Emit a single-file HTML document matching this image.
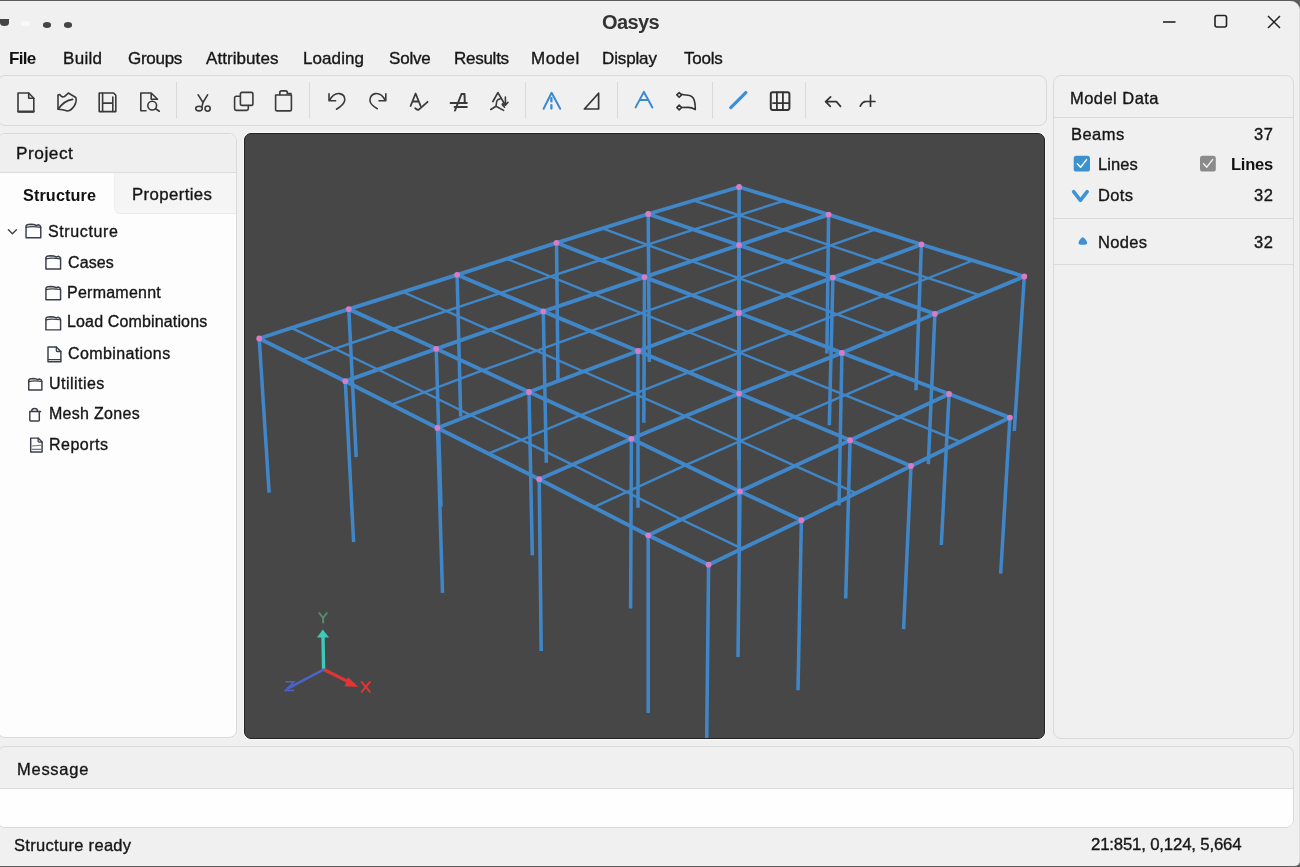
<!DOCTYPE html>
<html><head><meta charset="utf-8">
<style>
*{margin:0;padding:0;box-sizing:border-box}
html,body{width:1300px;height:867px;overflow:hidden;background:#5c5c5c;font-family:"Liberation Sans",sans-serif;color:#222}
.abs{position:absolute}
#win{position:absolute;left:0;top:1px;width:1300px;height:865px;background:#f0f0f0;border-right:1.5px solid #e0e0e0;border-radius:0 9px 5px 0}
.t{position:absolute;white-space:nowrap;line-height:1;will-change:transform}
.menu{font-size:17px;color:#1e1e1e}
.panel{position:absolute;border:1px solid #d9d9d9;border-radius:8px}
.ico{position:absolute}
.sep{position:absolute;width:1px;background:#d6d6d6;top:85px;height:33px}
</style></head><body>
<div id="win"></div>
<!-- title bar -->
<div class="abs" style="left:0;top:19px;width:9px;height:7px;background:#444;border-radius:0 0 50% 50%"></div>
<div class="abs" style="left:21px;top:21px;width:9px;height:5px;background:#f8f8f8;border-radius:40%"></div>
<div class="abs" style="left:43px;top:22px;width:8px;height:5.5px;background:#444;border-radius:50%"></div>
<div class="abs" style="left:64px;top:22px;width:8px;height:5.5px;background:#444;border-radius:50%"></div>
<svg class="ico" style="left:1155px;top:8px" width="140" height="28" viewBox="1155 8 140 28">
 <line x1="1163" y1="22" x2="1175.5" y2="22" stroke="#222" stroke-width="1.6"/>
 <rect x="1215" y="15.5" width="11.5" height="11.5" rx="2" fill="none" stroke="#222" stroke-width="1.6"/>
 <path d="M1268 16 L1280 28 M1280 16 L1268 28" stroke="#222" stroke-width="1.5"/>
</svg>
<!-- menu -->
<!-- toolbar panel -->
<div class="panel" style="left:-3px;top:75px;width:1050px;height:51px"></div>
<svg class="ico" style="left:0;top:76px" width="1040" height="49" viewBox="0 76 1040 49">
<g fill="none" stroke="#3a3a3a" stroke-width="1.6" stroke-linejoin="round" stroke-linecap="round">
 <!-- new -->
 <path d="M18 93 L28.7 93 L33.8 98.2 L33.8 111.7 L18 111.7 Z"/><path d="M18.5 111.6 L33.5 111.6" stroke-width="2.2"/>
 <path d="M28.7 93 L28.7 98.3 L33.8 98.3" stroke-width="1.6"/>
 <!-- open -->
 <path d="M58 95 Q60 94 60.5 95.5 Q62 97.5 64.5 96.5 Q66.5 95 68.3 93 L75.8 97.5 Q77 101 74.5 105.5 Q71.5 110.5 67.5 111 Q62.5 109.5 58 109.3 Z"/>
 <path d="M58.3 109 Q64 100.5 72.6 99.3" stroke-width="1.7"/>
 <!-- save -->
 <path d="M99.2 93 L113.6 93 L115.8 95.3 L115.8 111.6 L99.2 111.6 Z"/>
 <path d="M102.6 93.2 L102.6 111.5 M112.8 97 L112.8 111.5 M102.6 103.1 L112.8 103.1"/>
 <!-- preview -->
 <path d="M146 110.8 L140.8 110.8 L140.8 93 L151.2 93 L157.5 99.2 L151.2 99.2 L151.2 93"/>
 <circle cx="152.2" cy="105.6" r="4.4"/>
 <path d="M155.5 108.8 L159.3 111.2"/>
 <!-- scissors -->
 <path d="M198.2 94.8 L203 102.5 L207.6 94.8 M203 102.5 L202 106.5" stroke-width="1.6"/>
 <ellipse cx="199" cy="108.6" rx="3.3" ry="2.3" stroke-width="1.6"/>
 <circle cx="207.6" cy="108.6" r="2.6" stroke-width="1.6"/>
 <!-- copy -->
 <path d="M240.3 96.3 L236.3 96.3 Q234.6 96.3 234.6 98 L234.6 108.8 Q234.6 110.4 236.3 110.4 L246.6 110.4 Q248.3 110.4 248.3 108.8 L248.3 105.5"/>
 <rect x="240.4" y="92.4" width="12.5" height="13" rx="1.7"/>
 <!-- clipboard -->
 <path d="M275.6 95 L291.4 95 L291.4 109.2 Q291.4 110.9 289.7 110.9 L277.3 110.9 Q275.6 110.9 275.6 109.2 Z"/>
 <path d="M279.8 94.5 L279.8 92.6 Q279.8 90.8 281.6 90.8 L285.6 90.8 Q287.3 90.8 287.3 92.6 L287.3 93.6 L291 93.6" stroke-width="1.7"/>
 <!-- undo -->
 <path d="M329 93.8 L329 100.8 L335.6 100.8"/>
 <path d="M329.8 100 Q333.5 93 339.5 93.6 Q345 94.5 344.8 100.2 Q344 105 336.5 109.2"/>
 <!-- redo -->
 <path d="M385.8 93.8 L385.8 100.8 L379 100.8"/>
 <path d="M385 100 Q381.5 93 375.5 93.6 Q370 94.5 369.9 100.5 Q370.5 105 377.3 108.7"/>
 <!-- A check -->
 <path d="M410.6 106 L415.6 93.5 L420.6 106 M412.6 101.5 L418.8 101.5" stroke-width="1.8"/>
 <path d="M415.2 108.2 Q417 110.2 418.8 109.6 L427.6 101.8" stroke-width="1.8"/>
 <!-- A strike -->
 <path d="M455 110.5 L461.5 94 L464.5 94 L464.8 102.5" stroke-width="2"/>
 <path d="M450.6 103.1 L466.8 103.1 M454.6 107.1 L466.8 107.1" stroke-width="2"/>
 <!-- A arrow -->
 <path d="M492.9 101.5 L497.9 92.6 L504.2 103.2" stroke-width="1.7"/>
 <path d="M505.4 97 L505.4 104.5 M502.5 103.8 L505.4 105.3 L508 102.3" stroke-width="1.6"/>
 <path d="M490.8 109.5 L496 106.2 L503.6 110.4 M496 106.2 L496.8 101 Q497.8 99 500.2 98.9 M502.3 104.6 L504.6 107.2" stroke-width="1.6"/>
</g>
<g fill="none" stroke="#3b8ad0" stroke-width="2" stroke-linecap="round" stroke-linejoin="round">
 <path d="M543.6 108.8 L551.6 92.8 L560.2 108.8"/>
 <path d="M551.4 98.2 L551.4 101.4 M551.4 105.2 L551.4 108.6" stroke-width="2.3"/>
 <path d="M635.6 107.4 L643.9 91.9 L652.4 107.4 M639.6 100.1 L648.4 100.1"/>
 <path d="M730.8 107.6 L745.8 92.6" stroke-width="3.3" stroke="#3d8fd6"/>
</g>
<g fill="none" stroke="#333" stroke-width="1.7" stroke-linejoin="round" stroke-linecap="round">
 <path d="M584.4 109 L598.6 93.2 L598.6 109 Z"/>
 <!-- curve -->
 <path d="M679.2 92.6 L681.6 94.9 L679.2 97.3 L676.8 94.9 Z M679.2 105.1 L681.6 107.5 L679.2 109.9 L676.8 107.5 Z" stroke-width="1.6"/>
 <path d="M681.6 94.3 Q683.5 95 686 95 Q690.5 95 692.8 97.5 Q695.3 100.5 695.3 109.6 Q692 107.4 688 107.4 L681.6 107.5" stroke-width="1.6"/>
 <!-- grid -->
 <rect x="770.8" y="92.2" width="18.6" height="17.7" rx="1.8" stroke-width="2"/>
 <path d="M776.9 92.5 L776.9 109.8 M782.9 92.5 L782.9 109.8 M773 103.1 L789.2 103.1" stroke-width="1.8"/>
 <!-- back arrow -->
 <path d="M830.6 96.8 L825.6 101.6 L830.3 106.4 M825.8 101.6 L836.4 101.6 L840.5 106.4" stroke-width="1.7"/>
 <!-- plus curve -->
 <path d="M870.5 95.4 L870.5 106.2 M864.5 101.5 L875 101.5 M860.3 106.2 Q862.5 101.6 865.5 101.6" stroke-width="1.7"/>
</g>
<g stroke="#d9d9d9" stroke-width="1">
 <line x1="176.5" y1="82" x2="176.5" y2="118.5"/>
 <line x1="309.5" y1="82" x2="309.5" y2="118.5"/>
 <line x1="525.5" y1="82" x2="525.5" y2="118.5"/>
 <line x1="617.5" y1="82" x2="617.5" y2="118.5"/>
 <line x1="712.5" y1="82" x2="712.5" y2="118.5"/>
 <line x1="805.5" y1="82" x2="805.5" y2="118.5"/>
</g>
</svg>

<!-- project panel -->
<div class="panel" style="left:-3px;top:133px;width:240px;height:605px;background:#fdfdfd;overflow:hidden">
  <div class="abs" style="left:0;top:0;width:240px;height:39px;background:#efefef;border-bottom:1px solid #dcdcdc"></div>
  <div class="abs" style="left:116px;top:39px;width:124px;height:41px;background:#f5f5f5;border-bottom-left-radius:6px;border-bottom:1px solid #ececec;border-left:1px solid #f0f0f0"></div>
</div>
<svg class="ico" style="left:0;top:215px" width="70" height="245" viewBox="0 215 70 245"><g fill="none" stroke="#3a3e47" stroke-width="1.45" stroke-linejoin="round" stroke-linecap="round">
<path d="M8.4 229.8 L12.4 233.8 L16.4 229.8" stroke="#444" stroke-width="1.4"/>
<path d="M26.03 237.68 L26.03 225.92 Q26.63 224.32 30.53 224.32 Q34.03 224.42 36.57 225.52 L38.38 224.82 Q40.77 225.52 40.77 227.32 L40.77 237.68 Z" stroke-width="1.45"/><path d="M26.03 227.42 Q31.03 225.92 40.77 227.32" stroke-width="1.2"/>
<path d="M45.93 268.97 L45.93 257.43 Q46.53 255.82 50.43 255.82 Q53.93 255.92 56.38 257.02 L58.18 256.32 Q60.58 257.02 60.58 258.82 L60.58 268.97 Z" stroke-width="1.45"/><path d="M45.93 258.93 Q50.93 257.43 60.58 258.82" stroke-width="1.2"/>
<path d="M45.93 299.68 L45.93 288.13 Q46.53 286.53 50.43 286.53 Q53.93 286.63 56.38 287.73 L58.18 287.03 Q60.58 287.73 60.58 289.53 L60.58 299.68 Z" stroke-width="1.45"/><path d="M45.93 289.63 Q50.93 288.13 60.58 289.53" stroke-width="1.2"/>
<path d="M45.93 329.88 L45.93 318.33 Q46.53 316.73 50.43 316.73 Q53.93 316.83 56.38 317.93 L58.18 317.23 Q60.58 317.93 60.58 319.73 L60.58 329.88 Z" stroke-width="1.45"/><path d="M45.93 319.83 Q50.93 318.33 60.58 319.73" stroke-width="1.2"/>
<path d="M48.0 346.9 L56.3 346.9 L60.9 351.5 L60.9 361.7 L48.0 361.7 Z"/><path d="M56.3 346.9 L56.3 350.5 Q56.3 351.5 57.3 351.5 L60.9 351.5" stroke-width="1.3"/>
<path d="M48.3 359.6 L60.6 359.6" stroke-width="1.2"/>
<path d="M28.73 390.07 L28.73 380.13 Q29.33 378.53 33.23 378.53 Q36.73 378.63 37.67 379.73 L39.48 379.03 Q41.88 379.73 41.88 381.53 L41.88 390.07 Z" stroke-width="1.45"/><path d="M28.73 381.63 Q33.73 380.13 41.88 381.53" stroke-width="1.2"/>
<path d="M29.8 411.5 L40.5 411.5 L39.3 412 L39.3 420.3 Q39.3 421 38.5 421 L30.6 421 Q29.8 421 29.8 420.3 Z"/>
<path d="M31.6 411.2 Q31.8 408.4 34.6 408.4 Q37.4 408.4 37.6 411.2" stroke-width="1.5"/>
<path d="M30.7 438.1 L38.1 438.1 L42.1 442.1 L42.1 451.9 L30.7 451.9 Z"/><path d="M38.1 438.1 L38.1 441.1 Q38.1 442.1 39.1 442.1 L42.1 442.1" stroke-width="1.3"/>
<path d="M32.3 446 L40.8 445.2" stroke="#777" stroke-width="1.1"/>
<path d="M32.3 449.3 L40.8 449.3" stroke="#5a78b8" stroke-width="1.3"/>
</g></svg>
<!-- viewport -->
<div class="abs" style="left:244px;top:133px;width:801px;height:606px;background:#474747;border:1px solid #232323;border-radius:7px;overflow:hidden;box-shadow:0 0 0 1px #f9f9f9">
<svg width="802" height="606" viewBox="244 133 802 606" style="position:absolute;left:-1px;top:-1px">
<path d="M302.2,359.9 L392.5,329.0 L500.2,293.1 L600.5,260.0 L693.7,229.6 L783.9,200.8" fill="none" stroke="#4087c9" stroke-width="2.4"/>
<path d="M391.4,404.6 L482.6,370.4 L590.6,331.2 L691.7,295.1 L786.0,261.4 L875.0,229.6" fill="none" stroke="#4087c9" stroke-width="2.4"/>
<path d="M488.4,453.6 L580.2,415.4 L688.5,372.3 L790.4,332.9 L883.9,295.7 L972.8,260.5" fill="none" stroke="#4087c9" stroke-width="2.4"/>
<path d="M593.7,507.2 L685.7,465.1 L794.6,416.9 L895.5,373.4" fill="none" stroke="#4087c9" stroke-width="2.4"/>
<path d="M291.5,327.9 L378.0,369.5 L470.4,415.0 L572.4,464.7 L681.2,519.5 L742.0,548.7" fill="none" stroke="#4087c9" stroke-width="2.4"/>
<path d="M403.0,292.0 L489.8,330.1 L583.5,371.5 L685.2,416.2 L795.0,465.8 L856.2,493.1" fill="none" stroke="#4087c9" stroke-width="2.4"/>
<path d="M506.8,258.8 L593.9,294.2 L688.5,332.0 L790.5,373.2 L899.6,417.1 L960.5,441.8" fill="none" stroke="#4087c9" stroke-width="2.4"/>
<path d="M602.4,228.4 L691.8,261.1 L785.9,295.3 L888.4,333.4" fill="none" stroke="#4087c9" stroke-width="2.4"/>
<path d="M693.7,200.5 L783.9,229.8 L877.1,261.1 L979.6,295.1" fill="none" stroke="#4087c9" stroke-width="2.4"/>
<line x1="259.2" y1="338.5" x2="269.1" y2="492.6" stroke="#4087c9" stroke-width="3.5"/>
<line x1="348.8" y1="309.1" x2="356.2" y2="457.1" stroke="#4087c9" stroke-width="3.5"/>
<line x1="457.1" y1="274.8" x2="460.7" y2="416.5" stroke="#4087c9" stroke-width="3.5"/>
<line x1="556.5" y1="242.8" x2="558.0" y2="379.9" stroke="#4087c9" stroke-width="3.5"/>
<line x1="648.2" y1="214.0" x2="649.3" y2="361.9" stroke="#4087c9" stroke-width="3.5"/>
<line x1="739.1" y1="187.0" x2="739.0" y2="330.0" stroke="#4087c9" stroke-width="3.5"/>
<line x1="345.3" y1="381.2" x2="353.6" y2="542.1" stroke="#4087c9" stroke-width="3.5"/>
<line x1="436.2" y1="348.8" x2="441.0" y2="506.6" stroke="#4087c9" stroke-width="3.5"/>
<line x1="543.3" y1="311.4" x2="546.3" y2="462.7" stroke="#4087c9" stroke-width="3.5"/>
<line x1="644.5" y1="277.1" x2="643.8" y2="422.7" stroke="#4087c9" stroke-width="3.5"/>
<line x1="739.1" y1="245.1" x2="739.0" y2="390.0" stroke="#4087c9" stroke-width="3.5"/>
<line x1="828.6" y1="214.6" x2="826.9" y2="353.4" stroke="#4087c9" stroke-width="3.5"/>
<line x1="437.5" y1="428.0" x2="442.5" y2="592.9" stroke="#4087c9" stroke-width="3.5"/>
<line x1="529.0" y1="392.0" x2="532.3" y2="555.3" stroke="#4087c9" stroke-width="3.5"/>
<line x1="638.0" y1="351.0" x2="638.0" y2="507.8" stroke="#4087c9" stroke-width="3.5"/>
<line x1="738.9" y1="313.0" x2="739.0" y2="460.0" stroke="#4087c9" stroke-width="3.5"/>
<line x1="832.9" y1="277.6" x2="829.3" y2="425.3" stroke="#4087c9" stroke-width="3.5"/>
<line x1="921.4" y1="244.5" x2="916.0" y2="390.2" stroke="#4087c9" stroke-width="3.5"/>
<line x1="539.2" y1="479.2" x2="541.2" y2="651.0" stroke="#4087c9" stroke-width="3.5"/>
<line x1="631.4" y1="438.8" x2="630.6" y2="608.6" stroke="#4087c9" stroke-width="3.5"/>
<line x1="739.1" y1="393.6" x2="739.0" y2="550.0" stroke="#4087c9" stroke-width="3.5"/>
<line x1="841.9" y1="352.9" x2="839.0" y2="505.5" stroke="#4087c9" stroke-width="3.5"/>
<line x1="934.9" y1="313.8" x2="928.3" y2="464.1" stroke="#4087c9" stroke-width="3.5"/>
<line x1="1024.3" y1="276.5" x2="1014.3" y2="431.0" stroke="#4087c9" stroke-width="3.5"/>
<line x1="648.2" y1="535.3" x2="648.2" y2="713.0" stroke="#4087c9" stroke-width="3.5"/>
<line x1="740.0" y1="491.4" x2="738.0" y2="656.9" stroke="#4087c9" stroke-width="3.5"/>
<line x1="850.1" y1="440.2" x2="845.7" y2="598.5" stroke="#4087c9" stroke-width="3.5"/>
<line x1="949.1" y1="394.0" x2="941.3" y2="545.0" stroke="#4087c9" stroke-width="3.5"/>
<line x1="708.6" y1="564.7" x2="706.7" y2="740.0" stroke="#4087c9" stroke-width="3.5"/>
<line x1="801.4" y1="520.2" x2="798.0" y2="690.2" stroke="#4087c9" stroke-width="3.5"/>
<line x1="911.0" y1="466.0" x2="903.6" y2="629.1" stroke="#4087c9" stroke-width="3.5"/>
<line x1="1009.9" y1="417.6" x2="1000.7" y2="573.7" stroke="#4087c9" stroke-width="3.5"/>
<path d="M259.2,338.5 L348.8,309.1 L457.1,274.8 L556.5,242.8 L648.2,214.0 L739.1,187.0" fill="none" stroke="#4087c9" stroke-width="3.9" stroke-linejoin="round"/>
<path d="M345.3,381.2 L436.2,348.8 L543.3,311.4 L644.5,277.1 L739.1,245.1 L828.6,214.6" fill="none" stroke="#4087c9" stroke-width="3.9" stroke-linejoin="round"/>
<path d="M437.5,428.0 L529.0,392.0 L638.0,351.0 L738.9,313.0 L832.9,277.6 L921.4,244.5" fill="none" stroke="#4087c9" stroke-width="3.9" stroke-linejoin="round"/>
<path d="M539.2,479.2 L631.4,438.8 L739.1,393.6 L841.9,352.9 L934.9,313.8 L1024.3,276.5" fill="none" stroke="#4087c9" stroke-width="3.9" stroke-linejoin="round"/>
<path d="M648.2,535.3 L740.0,491.4 L850.1,440.2 L949.1,394.0" fill="none" stroke="#4087c9" stroke-width="3.9" stroke-linejoin="round"/>
<path d="M708.6,564.7 L801.4,520.2 L911.0,466.0 L1009.9,417.6" fill="none" stroke="#4087c9" stroke-width="3.9" stroke-linejoin="round"/>
<path d="M259.2,338.5 L345.3,381.2 L437.5,428.0 L539.2,479.2 L648.2,535.3 L708.6,564.7" fill="none" stroke="#4087c9" stroke-width="3.9" stroke-linejoin="round"/>
<path d="M348.8,309.1 L436.2,348.8 L529.0,392.0 L631.4,438.8 L740.0,491.4 L801.4,520.2" fill="none" stroke="#4087c9" stroke-width="3.9" stroke-linejoin="round"/>
<path d="M457.1,274.8 L543.3,311.4 L638.0,351.0 L739.1,393.6 L850.1,440.2 L911.0,466.0" fill="none" stroke="#4087c9" stroke-width="3.9" stroke-linejoin="round"/>
<path d="M556.5,242.8 L644.5,277.1 L738.9,313.0 L841.9,352.9 L949.1,394.0 L1009.9,417.6" fill="none" stroke="#4087c9" stroke-width="3.9" stroke-linejoin="round"/>
<path d="M648.2,214.0 L739.1,245.1 L832.9,277.6 L934.9,313.8" fill="none" stroke="#4087c9" stroke-width="3.9" stroke-linejoin="round"/>
<path d="M739.1,187.0 L828.6,214.6 L921.4,244.5 L1024.3,276.5" fill="none" stroke="#4087c9" stroke-width="3.9" stroke-linejoin="round"/>
<circle cx="259.2" cy="338.5" r="2.9" fill="#d97cc6"/>
<circle cx="348.8" cy="309.1" r="2.9" fill="#d97cc6"/>
<circle cx="457.1" cy="274.8" r="2.9" fill="#d97cc6"/>
<circle cx="556.5" cy="242.8" r="2.9" fill="#d97cc6"/>
<circle cx="648.2" cy="214.0" r="2.9" fill="#d97cc6"/>
<circle cx="739.1" cy="187.0" r="2.9" fill="#d97cc6"/>
<circle cx="345.3" cy="381.2" r="2.9" fill="#d97cc6"/>
<circle cx="436.2" cy="348.8" r="2.9" fill="#d97cc6"/>
<circle cx="543.3" cy="311.4" r="2.9" fill="#d97cc6"/>
<circle cx="644.5" cy="277.1" r="2.9" fill="#d97cc6"/>
<circle cx="739.1" cy="245.1" r="2.9" fill="#d97cc6"/>
<circle cx="828.6" cy="214.6" r="2.9" fill="#d97cc6"/>
<circle cx="437.5" cy="428.0" r="2.9" fill="#d97cc6"/>
<circle cx="529.0" cy="392.0" r="2.9" fill="#d97cc6"/>
<circle cx="638.0" cy="351.0" r="2.9" fill="#d97cc6"/>
<circle cx="738.9" cy="313.0" r="2.9" fill="#d97cc6"/>
<circle cx="832.9" cy="277.6" r="2.9" fill="#d97cc6"/>
<circle cx="921.4" cy="244.5" r="2.9" fill="#d97cc6"/>
<circle cx="539.2" cy="479.2" r="2.9" fill="#d97cc6"/>
<circle cx="631.4" cy="438.8" r="2.9" fill="#d97cc6"/>
<circle cx="739.1" cy="393.6" r="2.9" fill="#d97cc6"/>
<circle cx="841.9" cy="352.9" r="2.9" fill="#d97cc6"/>
<circle cx="934.9" cy="313.8" r="2.9" fill="#d97cc6"/>
<circle cx="1024.3" cy="276.5" r="2.9" fill="#d97cc6"/>
<circle cx="648.2" cy="535.3" r="2.9" fill="#d97cc6"/>
<circle cx="740.0" cy="491.4" r="2.9" fill="#d97cc6"/>
<circle cx="850.1" cy="440.2" r="2.9" fill="#d97cc6"/>
<circle cx="949.1" cy="394.0" r="2.9" fill="#d97cc6"/>
<circle cx="708.6" cy="564.7" r="2.9" fill="#d97cc6"/>
<circle cx="801.4" cy="520.2" r="2.9" fill="#d97cc6"/>
<circle cx="911.0" cy="466.0" r="2.9" fill="#d97cc6"/>
<circle cx="1009.9" cy="417.6" r="2.9" fill="#d97cc6"/>
<g stroke-linecap="butt">
<line x1="323.6" y1="669.5" x2="323" y2="636" stroke="#3ec9b9" stroke-width="3.4"/>
<path d="M317 637.6 L322.8 629.6 L329 637.6 Z" fill="#3ec9b9"/>
<path d="M318.8 612.5 L323.1 617.8 L327.4 612.5 M323.1 617.8 L323.1 623.3" fill="none" stroke="#5a8c74" stroke-width="1.9"/>
<line x1="324" y1="669.5" x2="350" y2="682.6" stroke="#e03535" stroke-width="3.2"/>
<path d="M348 677 L358.4 687 L344.6 686.2 Z" fill="#e03535"/>
<path d="M361.2 681.4 L370.4 692.4 M370.4 681.4 L361.2 692.4" fill="none" stroke="#e03535" stroke-width="2.1"/>
<line x1="324" y1="669.3" x2="287.5" y2="688.6" stroke="#4a64cc" stroke-width="2.6"/>
<path d="M285.4 681.8 L294 681.8 L285.4 690.4 L294 690.4" fill="none" stroke="#4a64cc" stroke-width="1.5"/>
</g>
</svg>
</div>
<!-- model data -->
<div class="panel" style="left:1053px;top:75px;width:241px;height:664px">
  <div class="abs" style="left:0;top:41px;width:239px;height:1px;background:#dadada"></div>
  <div class="abs" style="left:0;top:142px;width:239px;height:1px;background:#dadada"></div>
  <div class="abs" style="left:0;top:188px;width:239px;height:1px;background:#dadada"></div>
</div>
<svg class="ico" style="left:1060px;top:150px" width="170" height="100" viewBox="1060 150 170 100">
<rect x="1073.7" y="155.8" width="16.3" height="15.8" rx="2.6" fill="#3b92cc"/>
<path d="M1077.3 163.8 L1080.6 167.2 L1086.6 159.6" fill="none" stroke="#fff" stroke-width="1.4" stroke-linecap="round" stroke-linejoin="round"/>
<rect x="1200" y="155.8" width="15.8" height="15.8" rx="2.6" fill="#8b8b8b"/>
<path d="M1203.6 163.8 L1206.8 167.2 L1212.6 159.6" fill="none" stroke="#f4f4f4" stroke-width="1.4" stroke-linecap="round" stroke-linejoin="round"/>
<path d="M1073.6 191.6 L1080.4 200.4 L1087.2 191.6" fill="none" stroke="#3e93d6" stroke-width="3.5" stroke-linecap="round" stroke-linejoin="round"/>
<path d="M1082.8 237.1 C1084.8 238.3 1087.1 241.2 1087.1 242.9 C1087.1 244.4 1085.4 244.8 1082.8 244.8 C1080.2 244.8 1078.5 244.4 1078.5 242.9 C1078.5 241.2 1080.8 238.3 1082.8 237.1 Z" fill="#3e90d2"/>
</svg>
<!-- message -->
<div class="panel" style="left:-3px;top:746px;width:1297px;height:82px;overflow:hidden">
  <div class="abs" style="left:0;top:41px;width:1302px;height:40px;background:#fefefe;border-top:1px solid #dadada"></div>
</div>
<div class="t" style="left:602.20px;top:12.27px;font-size:20px;font-weight:bold;color:#333;letter-spacing:-0.600px">Oasys</div>
<div class="t" style="left:9.40px;top:50.21px;font-size:17px;font-weight:bold;color:#111;letter-spacing:-0.700px">File</div>
<div class="t" style="left:63.10px;top:50.21px;font-size:17px;font-weight:normal;color:#161616;letter-spacing:0.300px;-webkit-text-stroke:0.35px #161616">Build</div>
<div class="t" style="left:127.80px;top:50.21px;font-size:17px;font-weight:normal;color:#161616;letter-spacing:-0.280px;-webkit-text-stroke:0.35px #161616">Groups</div>
<div class="t" style="left:206.20px;top:50.21px;font-size:17px;font-weight:normal;color:#161616;letter-spacing:0.067px;-webkit-text-stroke:0.35px #161616">Attributes</div>
<div class="t" style="left:303.20px;top:50.21px;font-size:17px;font-weight:normal;color:#161616;letter-spacing:0.083px;-webkit-text-stroke:0.35px #161616">Loading</div>
<div class="t" style="left:388.70px;top:50.21px;font-size:17px;font-weight:normal;color:#161616;letter-spacing:-0.200px;-webkit-text-stroke:0.35px #161616">Solve</div>
<div class="t" style="left:453.60px;top:50.21px;font-size:17px;font-weight:normal;color:#161616;letter-spacing:-0.267px;-webkit-text-stroke:0.35px #161616">Results</div>
<div class="t" style="left:531.40px;top:50.21px;font-size:17px;font-weight:normal;color:#161616;letter-spacing:0.500px;-webkit-text-stroke:0.35px #161616">Model</div>
<div class="t" style="left:602.00px;top:50.21px;font-size:17px;font-weight:normal;color:#161616;letter-spacing:-0.133px;-webkit-text-stroke:0.35px #161616">Display</div>
<div class="t" style="left:683.80px;top:50.21px;font-size:17px;font-weight:normal;color:#161616;letter-spacing:-0.225px;-webkit-text-stroke:0.35px #161616">Tools</div>
<div class="t" style="left:16.10px;top:144.76px;font-size:17.3px;font-weight:normal;color:#161616;letter-spacing:0.517px;-webkit-text-stroke:0.35px #161616">Project</div>
<div class="t" style="left:23.10px;top:186.69px;font-size:16.2px;font-weight:bold;color:#111;letter-spacing:0.125px">Structure</div>
<div class="t" style="left:132.40px;top:187.18px;font-size:16.8px;font-weight:normal;color:#161616;letter-spacing:0.389px;-webkit-text-stroke:0.35px #161616">Properties</div>
<div class="t" style="left:48.40px;top:223.86px;font-size:16px;font-weight:normal;color:#161616;letter-spacing:0.625px;-webkit-text-stroke:0.35px #161616">Structure</div>
<div class="t" style="left:67.70px;top:254.66px;font-size:16px;font-weight:normal;color:#161616;letter-spacing:0.125px;-webkit-text-stroke:0.35px #161616">Cases</div>
<div class="t" style="left:67.20px;top:284.76px;font-size:16px;font-weight:normal;color:#161616;letter-spacing:0.244px;-webkit-text-stroke:0.35px #161616">Permamennt</div>
<div class="t" style="left:67.20px;top:314.36px;font-size:16px;font-weight:normal;color:#161616;letter-spacing:0.144px;-webkit-text-stroke:0.35px #161616">Load Combinations</div>
<div class="t" style="left:67.70px;top:345.56px;font-size:16px;font-weight:normal;color:#161616;letter-spacing:0.391px;-webkit-text-stroke:0.35px #161616">Combinations</div>
<div class="t" style="left:49.20px;top:376.36px;font-size:16px;font-weight:normal;color:#161616;letter-spacing:0.475px;-webkit-text-stroke:0.35px #161616">Utilities</div>
<div class="t" style="left:49.10px;top:406.46px;font-size:16px;font-weight:normal;color:#161616;letter-spacing:0.289px;-webkit-text-stroke:0.35px #161616">Mesh Zones</div>
<div class="t" style="left:49.10px;top:436.56px;font-size:16px;font-weight:normal;color:#161616;letter-spacing:0.500px;-webkit-text-stroke:0.35px #161616">Reports</div>
<div class="t" style="left:1069.70px;top:90.33px;font-size:16.5px;font-weight:normal;color:#161616;letter-spacing:0.456px;-webkit-text-stroke:0.35px #161616">Model Data</div>
<div class="t" style="left:1071.40px;top:126.23px;font-size:16.5px;font-weight:normal;color:#161616;letter-spacing:0.450px;-webkit-text-stroke:0.35px #161616">Beams</div>
<div class="t" style="left:1253.80px;top:126.23px;font-size:16.5px;font-weight:normal;color:#161616;letter-spacing:0.600px;-webkit-text-stroke:0.35px #161616">37</div>
<div class="t" style="left:1098.30px;top:155.63px;font-size:16.5px;font-weight:normal;color:#161616;letter-spacing:0.075px;-webkit-text-stroke:0.35px #161616">Lines</div>
<div class="t" style="left:1230.60px;top:155.63px;font-size:16.5px;font-weight:bold;color:#111;letter-spacing:-0.250px">Lines</div>
<div class="t" style="left:1098.30px;top:187.23px;font-size:16.5px;font-weight:normal;color:#161616;letter-spacing:0.333px;-webkit-text-stroke:0.35px #161616">Dots</div>
<div class="t" style="left:1253.80px;top:187.23px;font-size:16.5px;font-weight:normal;color:#161616;letter-spacing:0.600px;-webkit-text-stroke:0.35px #161616">32</div>
<div class="t" style="left:1098.30px;top:233.93px;font-size:16.5px;font-weight:normal;color:#161616;letter-spacing:0.325px;-webkit-text-stroke:0.35px #161616">Nodes</div>
<div class="t" style="left:1253.80px;top:233.93px;font-size:16.5px;font-weight:normal;color:#161616;letter-spacing:0.600px;-webkit-text-stroke:0.35px #161616">32</div>
<div class="t" style="left:17.30px;top:761.03px;font-size:16.5px;font-weight:normal;color:#161616;letter-spacing:0.733px;-webkit-text-stroke:0.35px #161616">Message</div>
<div class="t" style="left:13.90px;top:837.43px;font-size:16.5px;font-weight:normal;color:#161616;letter-spacing:0.307px;-webkit-text-stroke:0.35px #161616">Structure ready</div>
<div class="t" style="left:1091.00px;top:837.18px;font-size:16.8px;font-weight:normal;color:#161616;letter-spacing:-0.179px;-webkit-text-stroke:0.35px #161616">21:851, 0,124, 5,664</div>
</body></html>
